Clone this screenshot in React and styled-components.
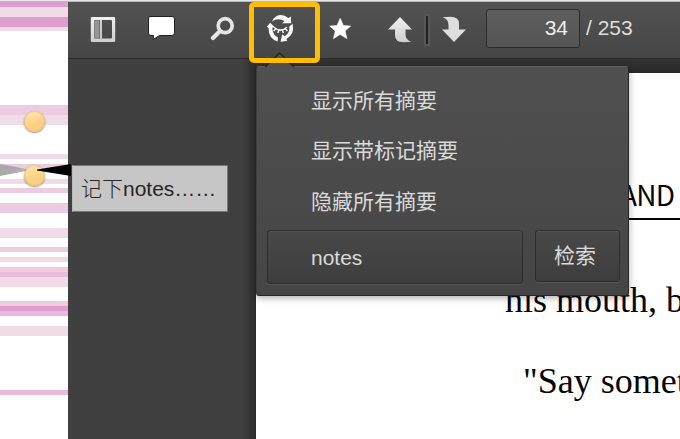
import React from "react";
import styled, { createGlobalStyle } from "styled-components";

const Global = createGlobalStyle`
  * { box-sizing: border-box; }
  body { margin: 0; background: #fff; overflow: hidden; font-family: "Liberation Sans", "Noto Sans CJK SC", sans-serif; }
`;

const Screen = styled.div`
  width: 680px;
  height: 439px;
  display: flex;
  flex-direction: column;
  position: relative;
  overflow: hidden;
`;
const TopEdge = styled.div`
  height: 2px;
  flex: none;
  background: linear-gradient(#e6e8ea 50%, #b6babb 50%);
`;
const Columns = styled.div`
  flex: 1;
  display: flex;
  min-height: 0;
`;
const Margin = styled.aside`
  width: 68px;
  flex: none;
`;
const Stripe = styled.div`
  height: ${(p) => p.$h}px;
  background: ${(p) => p.$c};
`;
const Reader = styled.main`
  flex: 1;
  min-width: 0;
  display: flex;
  flex-direction: column;
`;
const Toolbar = styled.header`
  height: 57px;
  flex: none;
  display: flex;
  align-items: flex-start;
  padding: 7px 0 0 21px;
  background: linear-gradient(#525252, #464646);
  border-bottom: 1px solid #292929;
`;
const ToolButton = styled.button`
  width: ${(p) => p.$w}px;
  height: 40px;
  margin-right: ${(p) => p.$gap}px;
  padding: 0;
  border: 0;
  background: none;
  flex: none;
  svg { display: block; }
`;
const Divider = styled.div`
  width: 6px;
  height: 32px;
  flex: none;
  border: 2px solid #575757;
  margin: 5px 11px 0 11px;
  background: #202020;
`;
const PageField = styled.div`
  width: 94px;
  height: 39px;
  padding-right: 11px;
  border: 1px solid #2b2b2b;
  border-radius: 3px;
  background: linear-gradient(#5e5e5e, #545454);
  color: #eee;
  font-size: 21px;
  line-height: 36px;
  text-align: right;
`;
const PageTotal = styled.span`
  margin: 1px 0 0 6px;
  color: #dedede;
  font-size: 21px;
  line-height: 36px;
  white-space: nowrap;
`;
const Body = styled.div`
  flex: 1;
  display: flex;
  min-height: 0;
`;
const Sidebar = styled.nav`
  width: 188px;
  flex: none;
  padding: 106px 0 0 4px;
  background: linear-gradient(90deg, transparent 174px, #2b2b2b 188px), #404040;
`;
const Note = styled.div`
  width: 156px;
  height: 47px;
  padding-left: 8px;
  border: 1px solid #777;
  border-left-color: #bbb;
  background: #c6c6c6;
  color: #262626;
  font-size: 21px;
  line-height: 46px;
  font-weight: 300;
  white-space: nowrap;
`;
const NoteLatin = styled.span`
  font-weight: 400;
`;
const Viewer = styled.section`
  flex: 1;
  min-width: 0;
`;
const ViewerGap = styled.div`
  height: 14px;
  background: linear-gradient(#333, #292929);
`;
const Paper = styled.article`
  height: 366px;
  background: #fff;
  color: #050505;
  overflow: hidden;
  white-space: nowrap;
`;
const Heading = styled.h1`
  margin: 104px 0 0 346px;
  height: 41px;
  font: 400 28px/34px "Noto Sans CJK SC", sans-serif;
  letter-spacing: -0.8px;
  padding-left: 18px;
`;
const Rule = styled.div`
  height: 2px;
  margin-left: 346px;
  background: #050505;
`;
const Line = styled.p`
  margin: ${(p) => p.$top}px 0 0 ${(p) => p.$left}px;
  font: 36px/42px "Liberation Serif", serif;
`;

const Menu = styled.div`
  position: absolute;
  left: 256px;
  top: 66px;
  width: 373px;
  height: 230px;
  padding: 9px 8px 10px 11px;
  border: 1px solid #262626;
  border-left-color: #3e3e3e;
  border-top-color: #606060;
  border-radius: 3px;
  background: linear-gradient(#505050, #454545);
  box-shadow: 0 2px 7px rgba(0, 0, 0, 0.32);
  color: #dadada;
  font-size: 21px;
`;
const MenuItem = styled.div`
  height: 50.300px;
  padding-left: 43px;
  line-height: 50px;
  white-space: nowrap;
`;
const SearchRow = styled.div`
  display: flex;
  align-items: flex-start;
  gap: 12px;
  margin-top: 3px;
  margin-left: -1px;
`;
const Control = styled.div`
  width: ${(p) => p.$w}px;
  height: ${(p) => p.$h}px;
  flex: none;
  padding-left: ${(p) => p.$pad}px;
  border: 1px solid #2d2d2d;
  border-radius: 3px;
  background: linear-gradient(#494949, #3d3d3d);
  box-shadow: inset 0 1px #545454, 0 1px #555;
  line-height: ${(p) => p.$line}px;
`;
const Pointer = styled.svg`
  position: absolute;
  left: 265px;
  top: 51px;
`;
const Highlight = styled.div`
  position: absolute;
  left: 249px;
  top: 2px;
  width: 71px;
  height: 61px;
  border: 5px solid #ffbf00;
  border-radius: 5px;
`;
const Bead = styled.div`
  position: absolute;
  left: 23.500px;
  top: ${(p) => p.$top}px;
  width: 21px;
  height: 21px;
  border-radius: 50%;
  background: linear-gradient(165deg, #ffeaae, #fccf83 65%);
  box-shadow: inset 0 0 2px #d9a04f, 0 1px 2px rgba(0, 0, 0, 0.45);
`;
const Tails = styled.svg`
  position: absolute;
  left: 0;
  top: 160px;
`;

const DEEP = "#e09dcf";
const MID = "#e8badb";
const SOFT = "#eccce0";
const PALE = "#f0dce6";
const stripes = [
  [5, DEEP], [10, PALE], [10, DEEP], [4, PALE], [74, "#fff"], [10, SOFT], [10, PALE],
  [29, "#fff"], [5, PALE], [5, "#fff"], [5, SOFT], [10, "#fff"], [5, PALE], [4, "#fff"], [5, SOFT],
  [10, "#fff"], [10, SOFT], [15, "#fff"], [10, PALE], [9, "#fff"], [5, SOFT], [5, "#fff"],
  [5, PALE], [5, "#fff"], [5, SOFT], [5, MID], [10, PALE], [14, "#fff"], [5, SOFT], [5, DEEP],
  [5, MID], [10, "#fff"], [10, PALE], [54, "#fff"], [5, MID],
];

function PanelIcon() {
  return (
    <svg width="28" height="40" viewBox="89 9 28 40">
      <defs>
        <linearGradient id="silver" x1="0" y1="0" x2="0" y2="1">
          <stop stopColor="#f0f0f0" />
          <stop offset="1" stopColor="#cfcfcf" />
        </linearGradient>
      </defs>
      <path fill="url(#silver)" fillRule="evenodd" d="M92 17h22q1.200 0 1.200 1.200v22.600q0 1.200-1.200 1.200H92q-1.200 0-1.200-1.200V18.200Q90.800 17 92 17ZM95 20q-1 0-1 1v16.500q0 1 1 1h16q1 0 1-1V21q0-1-1-1Z" />
      <path fill="#969696" d="M94.300 20.300h5.200v18h-5.200z" />
      <path fill="#eee" d="M100.200 20h1.600v18.500h-1.600z" />
    </svg>
  );
}
function CommentIcon() {
  return (
    <svg width="30" height="40" viewBox="146 9 30 40">
      <path fill="#fff" stroke="#202020" d="M150 16.500h22q2.500 0 2.500 2.500v13.500q0 3-2.500 3h-12.500l-6.500 4 .5-4h-2.500q-2.500 0-2.500-2.500V19q0-2.500 1.500-2.500z" />
    </svg>
  );
}
function SearchIcon() {
  return (
    <svg width="26" height="40" viewBox="210 9 26 40">
      <g fill="none" stroke="#e5e5e5">
        <circle cx="225.200" cy="25.700" r="7" strokeWidth="3.700" />
        <path strokeWidth="4.300" strokeLinecap="round" d="m219.500 31.500-6.500 6.500" />
      </g>
    </svg>
  );
}
function CycleEyeIcon() {
  return (
    <svg width="30" height="40" viewBox="265 9 30 40">
      <g fill="#fafafa">
        <path d="M272 21.500Q274.500 15.500 280.500 15Q285 15 288.500 18L290.800 16.500L291.200 23.200L282 23.200L284.500 21Q278 17.500 272 21.500Z" />
        <path d="M266.800 26.800L270.200 22.800L275 27.600L272.300 27.600Q272.500 35 278 37.500L277.500 41.500Q268.500 38.500 268.500 28Z" />
        <path d="M292.600 23.800Q295 34 286.500 39L287 41L280.500 41.800L282.300 34.300L284.800 36.300Q290 33 289.300 26.500Z" />
      </g>
      <path fill="none" stroke="#fafafa" strokeWidth="1.500" d="M274 27.200Q280.500 33 287 27.200M275.700 28.700l-2 2.200M278.800 30.200l-1 2.800M282.400 30.200l1 2.800M285.400 28.700l2 2.200" />
    </svg>
  );
}
function StarIcon() {
  return (
    <svg width="24" height="40" viewBox="328 9 24 40">
      <path fill="#fff" stroke="#fff" strokeWidth=".5" d="m340.200 18.200 3.200 7.200 7.300.6-5.500 5 1.800 7.700-6.800-4.200-6.800 4.200 1.800-7.700-5.500-5 7.300-.6z" />
    </svg>
  );
}
function ArrowIcon({ down }) {
  return (
    <svg width="26" height="40" viewBox="387 9 26 40">
      <path
        fill={down ? "#dedede" : "url(#silver)"}
        transform={down ? "rotate(180 400 29.500)" : undefined}
        d="M400 17 412 29.500h-6.500V34q0 6 6 7.800-3 .4-8 .4-8.500 0-8.500-7v-5.700h-7z"
      />
    </svg>
  );
}

export default function App() {
  return (
    <Screen>
      <Global />
      <TopEdge />
      <Columns>
        <Margin>
          {stripes.map(([h, c], i) => <Stripe key={i} $h={h} $c={c} />)}
        </Margin>
        <Reader>
          <Toolbar>
            <ToolButton $w={28} $gap={29} aria-label="Sidebar"><PanelIcon /></ToolButton>
            <ToolButton $w={30} $gap={34} aria-label="Comment"><CommentIcon /></ToolButton>
            <ToolButton $w={26} $gap={29} aria-label="Search"><SearchIcon /></ToolButton>
            <ToolButton $w={30} $gap={33} aria-label="Summaries"><CycleEyeIcon /></ToolButton>
            <ToolButton $w={24} $gap={35} aria-label="Bookmark"><StarIcon /></ToolButton>
            <ToolButton $w={26} $gap={0} aria-label="Previous"><ArrowIcon /></ToolButton>
            <Divider />
            <ToolButton $w={26} $gap={19} aria-label="Next"><ArrowIcon down /></ToolButton>
            <PageField>34</PageField>
            <PageTotal>/ 253</PageTotal>
          </Toolbar>
          <Body>
            <Sidebar>
              <Note>记下<NoteLatin>notes……</NoteLatin></Note>
            </Sidebar>
            <Viewer>
              <ViewerGap />
              <Paper>
                <Heading>AND</Heading>
                <Rule />
                <Line $top={59} $left={249}>his mouth, but</Line>
                <Line $top={39} $left={267}>"Say something</Line>
              </Paper>
            </Viewer>
          </Body>
        </Reader>
      </Columns>
      <Menu>
        <MenuItem>显示所有摘要</MenuItem>
        <MenuItem>显示带标记摘要</MenuItem>
        <MenuItem>隐藏所有摘要</MenuItem>
        <SearchRow>
          <Control $w={256} $h={54} $line={53} $pad={43}>notes</Control>
          <Control $w={85} $h={52} $line={49} $pad={18}>检索</Control>
        </SearchRow>
      </Menu>
      <Pointer width="30" height="17" viewBox="0 0 30 17">
        <path fill="#4f4f4f" d="M0 17 14.500 2 29 17z" />
        <path fill="none" stroke="#272727" strokeWidth="1.500" d="M0 16 14.500 2 29 16" />
      </Pointer>
      <Highlight />
      <Bead $top={111} />
      <Bead $top={165} />
      <Tails width="72" height="20" viewBox="0 160 72 20">
        <defs>
          <linearGradient id="fade"><stop stopColor="#aaa" /><stop offset="1" stopColor="#888" stopOpacity=".6" /></linearGradient>
        </defs>
        <path fill="url(#fade)" d="M0 164 26 169v2L0 176z" />
        <path d="M37 169.500 71 164v12l-34-5.500z" />
      </Tails>
    </Screen>
  );
}
